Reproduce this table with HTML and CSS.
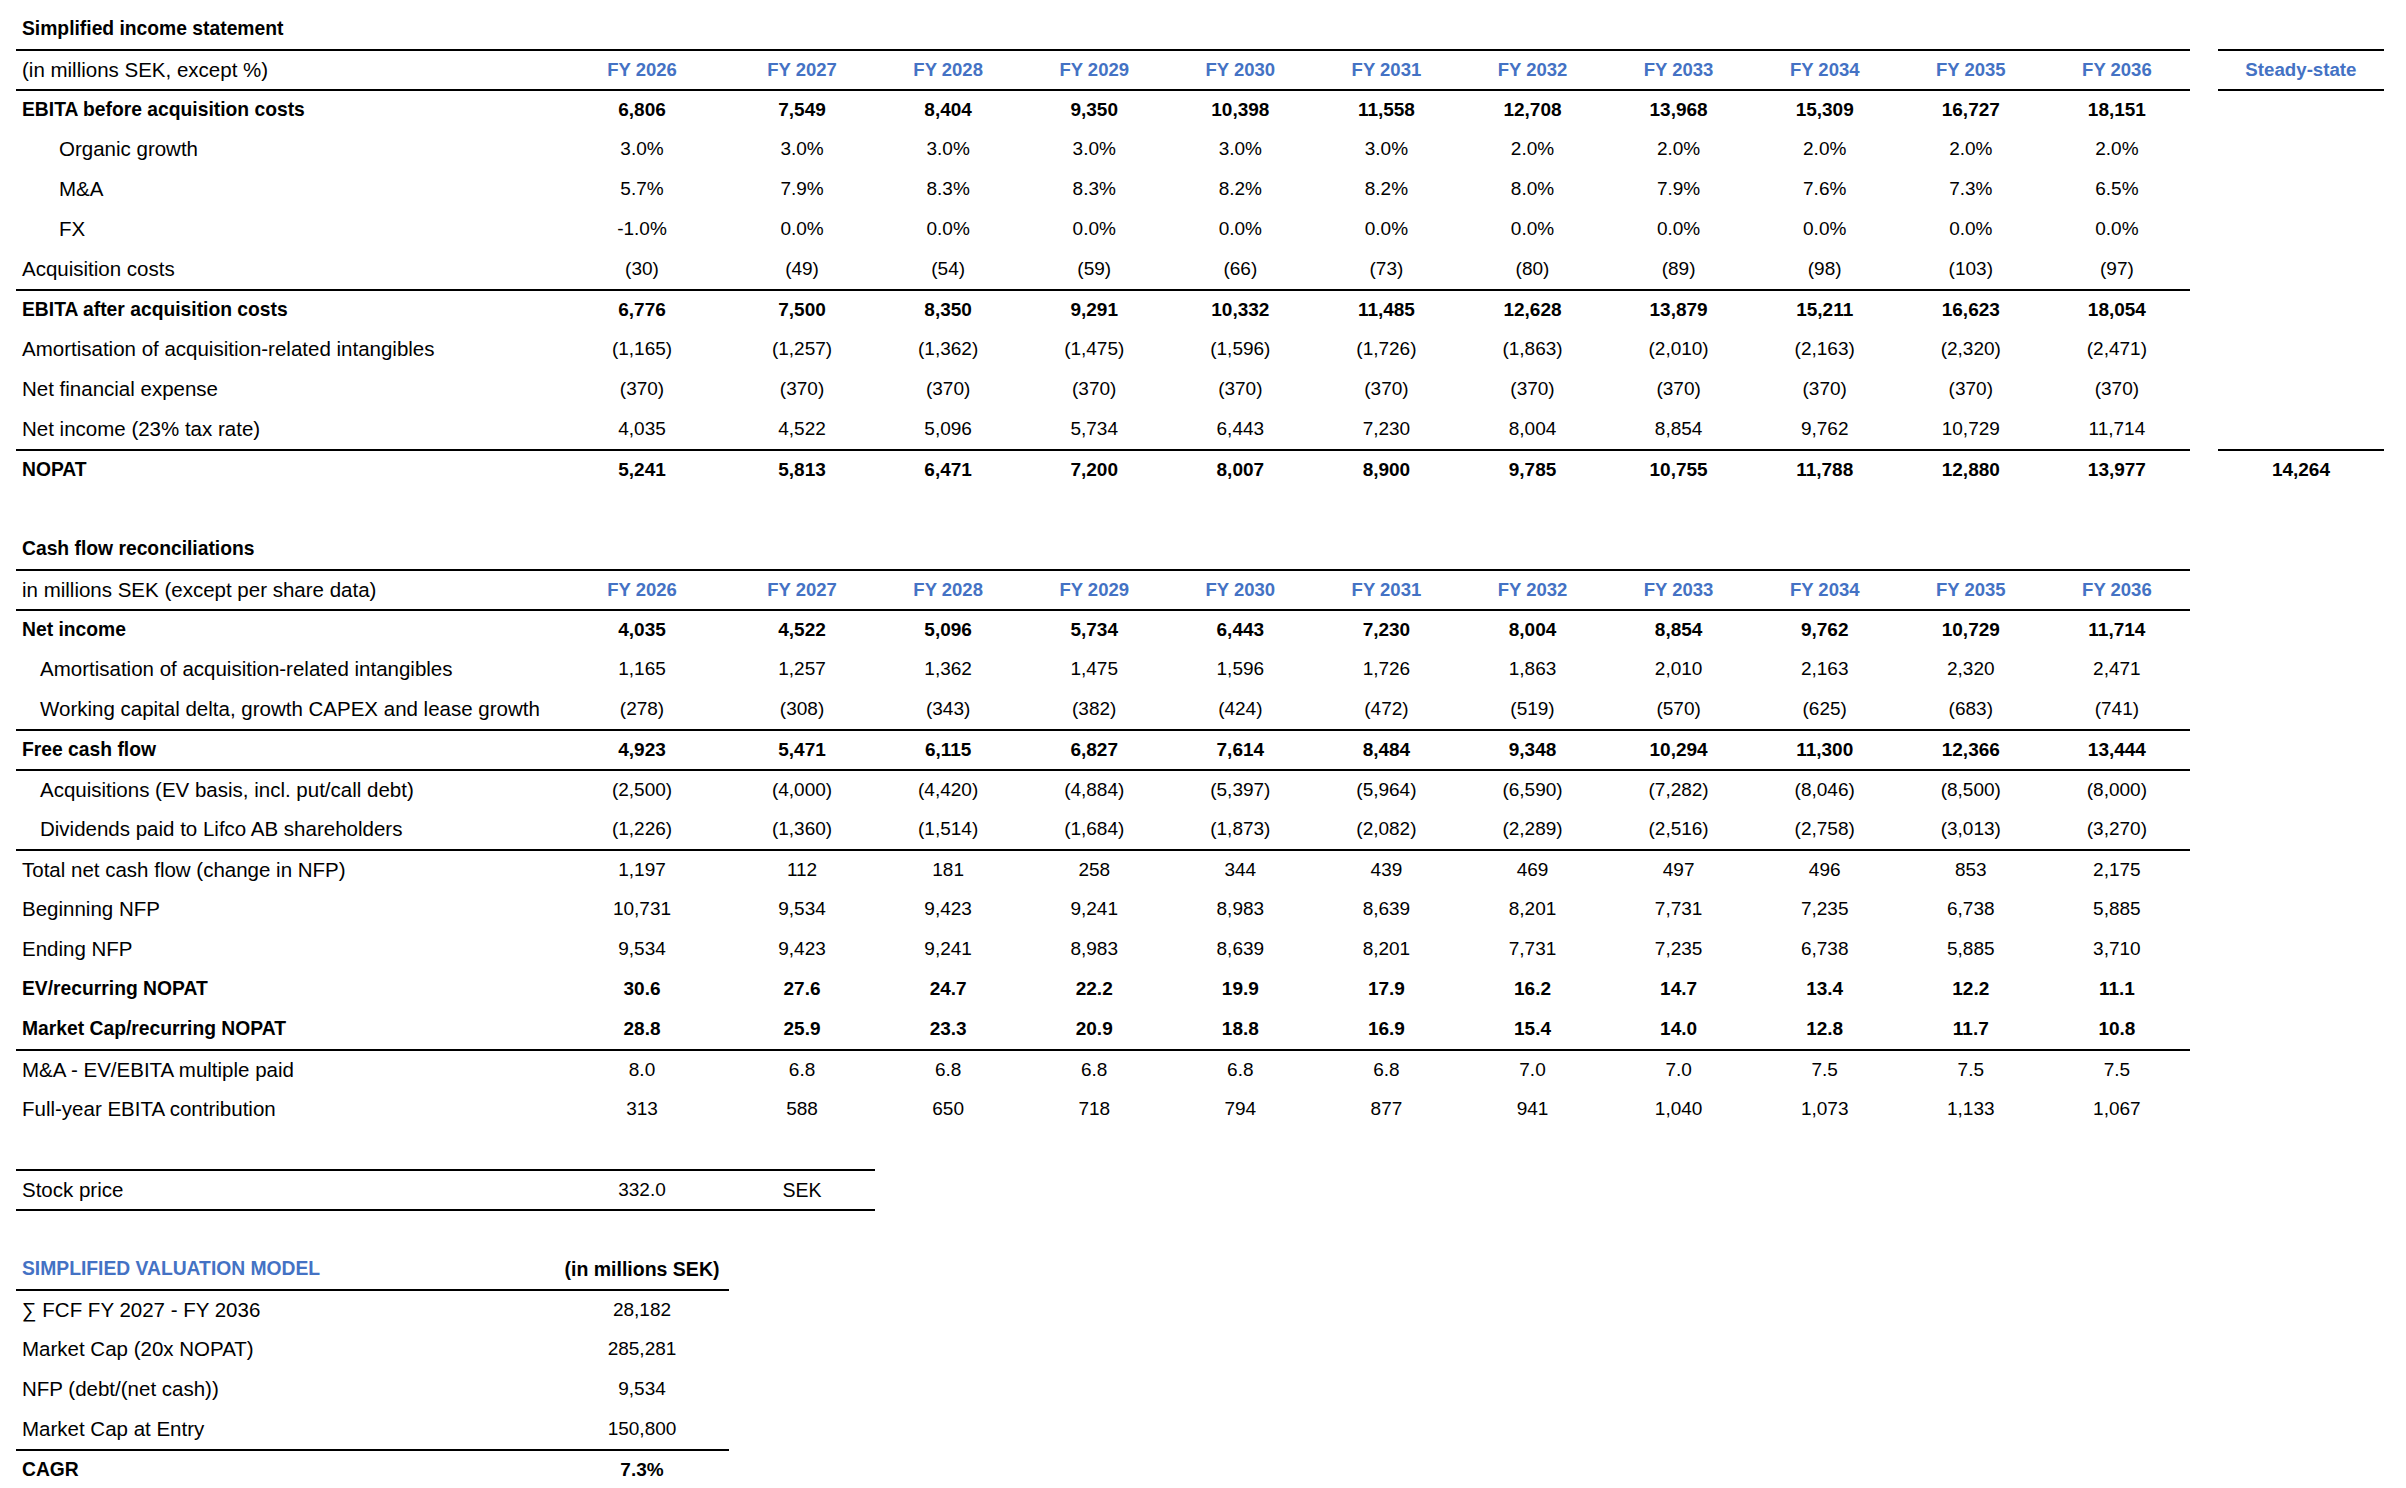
FILE: index.html
```html
<!DOCTYPE html>
<html lang="en">
<head>
<meta charset="utf-8">
<title>Simplified income statement</title>
<link rel="stylesheet" href="styles.css">
</head>
<body>
<div class="sheet">

  <div class="row"><div class="lbl b">Simplified income statement</div></div>

  <div class="row line">
    <div class="lbl">(in millions SEK, except %)</div>
    <div class="v h">FY 2026</div><div class="v h">FY 2027</div><div class="v h">FY 2028</div><div class="v h">FY 2029</div><div class="v h">FY 2030</div><div class="v h">FY 2031</div><div class="v h">FY 2032</div><div class="v h">FY 2033</div><div class="v h">FY 2034</div><div class="v h">FY 2035</div><div class="v h">FY 2036</div>
    <div class="sp"></div><div class="st h ln">Steady-state</div>
  </div>

  <div class="row line">
    <div class="lbl b">EBITA before acquisition costs</div>
    <div class="v b">6,806</div><div class="v b">7,549</div><div class="v b">8,404</div><div class="v b">9,350</div><div class="v b">10,398</div><div class="v b">11,558</div><div class="v b">12,708</div><div class="v b">13,968</div><div class="v b">15,309</div><div class="v b">16,727</div><div class="v b">18,151</div>
    <div class="sp"></div><div class="st ln"></div>
  </div>

  <div class="row">
    <div class="lbl i1">Organic growth</div>
    <div class="v">3.0%</div><div class="v">3.0%</div><div class="v">3.0%</div><div class="v">3.0%</div><div class="v">3.0%</div><div class="v">3.0%</div><div class="v">2.0%</div><div class="v">2.0%</div><div class="v">2.0%</div><div class="v">2.0%</div><div class="v">2.0%</div>
  </div>

  <div class="row">
    <div class="lbl i1">M&amp;A</div>
    <div class="v">5.7%</div><div class="v">7.9%</div><div class="v">8.3%</div><div class="v">8.3%</div><div class="v">8.2%</div><div class="v">8.2%</div><div class="v">8.0%</div><div class="v">7.9%</div><div class="v">7.6%</div><div class="v">7.3%</div><div class="v">6.5%</div>
  </div>

  <div class="row">
    <div class="lbl i1">FX</div>
    <div class="v">-1.0%</div><div class="v">0.0%</div><div class="v">0.0%</div><div class="v">0.0%</div><div class="v">0.0%</div><div class="v">0.0%</div><div class="v">0.0%</div><div class="v">0.0%</div><div class="v">0.0%</div><div class="v">0.0%</div><div class="v">0.0%</div>
  </div>

  <div class="row">
    <div class="lbl">Acquisition costs</div>
    <div class="v">(30)</div><div class="v">(49)</div><div class="v">(54)</div><div class="v">(59)</div><div class="v">(66)</div><div class="v">(73)</div><div class="v">(80)</div><div class="v">(89)</div><div class="v">(98)</div><div class="v">(103)</div><div class="v">(97)</div>
  </div>

  <div class="row line">
    <div class="lbl b">EBITA after acquisition costs</div>
    <div class="v b">6,776</div><div class="v b">7,500</div><div class="v b">8,350</div><div class="v b">9,291</div><div class="v b">10,332</div><div class="v b">11,485</div><div class="v b">12,628</div><div class="v b">13,879</div><div class="v b">15,211</div><div class="v b">16,623</div><div class="v b">18,054</div>
  </div>

  <div class="row">
    <div class="lbl">Amortisation of acquisition-related intangibles</div>
    <div class="v">(1,165)</div><div class="v">(1,257)</div><div class="v">(1,362)</div><div class="v">(1,475)</div><div class="v">(1,596)</div><div class="v">(1,726)</div><div class="v">(1,863)</div><div class="v">(2,010)</div><div class="v">(2,163)</div><div class="v">(2,320)</div><div class="v">(2,471)</div>
  </div>

  <div class="row">
    <div class="lbl">Net financial expense</div>
    <div class="v">(370)</div><div class="v">(370)</div><div class="v">(370)</div><div class="v">(370)</div><div class="v">(370)</div><div class="v">(370)</div><div class="v">(370)</div><div class="v">(370)</div><div class="v">(370)</div><div class="v">(370)</div><div class="v">(370)</div>
  </div>

  <div class="row">
    <div class="lbl">Net income (23% tax rate)</div>
    <div class="v">4,035</div><div class="v">4,522</div><div class="v">5,096</div><div class="v">5,734</div><div class="v">6,443</div><div class="v">7,230</div><div class="v">8,004</div><div class="v">8,854</div><div class="v">9,762</div><div class="v">10,729</div><div class="v">11,714</div>
  </div>

  <div class="row line">
    <div class="lbl b">NOPAT</div>
    <div class="v b">5,241</div><div class="v b">5,813</div><div class="v b">6,471</div><div class="v b">7,200</div><div class="v b">8,007</div><div class="v b">8,900</div><div class="v b">9,785</div><div class="v b">10,755</div><div class="v b">11,788</div><div class="v b">12,880</div><div class="v b">13,977</div>
    <div class="sp"></div><div class="st b ln">14,264</div>
  </div>

  <div class="row"></div>

  <div class="row"><div class="lbl b">Cash flow reconciliations</div></div>

  <div class="row line">
    <div class="lbl">in millions SEK (except per share data)</div>
    <div class="v h">FY 2026</div><div class="v h">FY 2027</div><div class="v h">FY 2028</div><div class="v h">FY 2029</div><div class="v h">FY 2030</div><div class="v h">FY 2031</div><div class="v h">FY 2032</div><div class="v h">FY 2033</div><div class="v h">FY 2034</div><div class="v h">FY 2035</div><div class="v h">FY 2036</div>
  </div>

  <div class="row line">
    <div class="lbl b">Net income</div>
    <div class="v b">4,035</div><div class="v b">4,522</div><div class="v b">5,096</div><div class="v b">5,734</div><div class="v b">6,443</div><div class="v b">7,230</div><div class="v b">8,004</div><div class="v b">8,854</div><div class="v b">9,762</div><div class="v b">10,729</div><div class="v b">11,714</div>
  </div>

  <div class="row">
    <div class="lbl i2">Amortisation of acquisition-related intangibles</div>
    <div class="v">1,165</div><div class="v">1,257</div><div class="v">1,362</div><div class="v">1,475</div><div class="v">1,596</div><div class="v">1,726</div><div class="v">1,863</div><div class="v">2,010</div><div class="v">2,163</div><div class="v">2,320</div><div class="v">2,471</div>
  </div>

  <div class="row">
    <div class="lbl i2">Working capital delta, growth CAPEX and lease growth</div>
    <div class="v">(278)</div><div class="v">(308)</div><div class="v">(343)</div><div class="v">(382)</div><div class="v">(424)</div><div class="v">(472)</div><div class="v">(519)</div><div class="v">(570)</div><div class="v">(625)</div><div class="v">(683)</div><div class="v">(741)</div>
  </div>

  <div class="row line">
    <div class="lbl b">Free cash flow</div>
    <div class="v b">4,923</div><div class="v b">5,471</div><div class="v b">6,115</div><div class="v b">6,827</div><div class="v b">7,614</div><div class="v b">8,484</div><div class="v b">9,348</div><div class="v b">10,294</div><div class="v b">11,300</div><div class="v b">12,366</div><div class="v b">13,444</div>
  </div>

  <div class="row line">
    <div class="lbl i2">Acquisitions (EV basis, incl. put/call debt)</div>
    <div class="v">(2,500)</div><div class="v">(4,000)</div><div class="v">(4,420)</div><div class="v">(4,884)</div><div class="v">(5,397)</div><div class="v">(5,964)</div><div class="v">(6,590)</div><div class="v">(7,282)</div><div class="v">(8,046)</div><div class="v">(8,500)</div><div class="v">(8,000)</div>
  </div>

  <div class="row">
    <div class="lbl i2">Dividends paid to Lifco AB shareholders</div>
    <div class="v">(1,226)</div><div class="v">(1,360)</div><div class="v">(1,514)</div><div class="v">(1,684)</div><div class="v">(1,873)</div><div class="v">(2,082)</div><div class="v">(2,289)</div><div class="v">(2,516)</div><div class="v">(2,758)</div><div class="v">(3,013)</div><div class="v">(3,270)</div>
  </div>

  <div class="row line">
    <div class="lbl">Total net cash flow (change in NFP)</div>
    <div class="v">1,197</div><div class="v">112</div><div class="v">181</div><div class="v">258</div><div class="v">344</div><div class="v">439</div><div class="v">469</div><div class="v">497</div><div class="v">496</div><div class="v">853</div><div class="v">2,175</div>
  </div>

  <div class="row">
    <div class="lbl">Beginning NFP</div>
    <div class="v">10,731</div><div class="v">9,534</div><div class="v">9,423</div><div class="v">9,241</div><div class="v">8,983</div><div class="v">8,639</div><div class="v">8,201</div><div class="v">7,731</div><div class="v">7,235</div><div class="v">6,738</div><div class="v">5,885</div>
  </div>

  <div class="row">
    <div class="lbl">Ending NFP</div>
    <div class="v">9,534</div><div class="v">9,423</div><div class="v">9,241</div><div class="v">8,983</div><div class="v">8,639</div><div class="v">8,201</div><div class="v">7,731</div><div class="v">7,235</div><div class="v">6,738</div><div class="v">5,885</div><div class="v">3,710</div>
  </div>

  <div class="row">
    <div class="lbl b">EV/recurring NOPAT</div>
    <div class="v b">30.6</div><div class="v b">27.6</div><div class="v b">24.7</div><div class="v b">22.2</div><div class="v b">19.9</div><div class="v b">17.9</div><div class="v b">16.2</div><div class="v b">14.7</div><div class="v b">13.4</div><div class="v b">12.2</div><div class="v b">11.1</div>
  </div>

  <div class="row">
    <div class="lbl b">Market Cap/recurring NOPAT</div>
    <div class="v b">28.8</div><div class="v b">25.9</div><div class="v b">23.3</div><div class="v b">20.9</div><div class="v b">18.8</div><div class="v b">16.9</div><div class="v b">15.4</div><div class="v b">14.0</div><div class="v b">12.8</div><div class="v b">11.7</div><div class="v b">10.8</div>
  </div>

  <div class="row line">
    <div class="lbl">M&amp;A - EV/EBITA multiple paid</div>
    <div class="v">8.0</div><div class="v">6.8</div><div class="v">6.8</div><div class="v">6.8</div><div class="v">6.8</div><div class="v">6.8</div><div class="v">7.0</div><div class="v">7.0</div><div class="v">7.5</div><div class="v">7.5</div><div class="v">7.5</div>
  </div>

  <div class="row">
    <div class="lbl">Full-year EBITA contribution</div>
    <div class="v">313</div><div class="v">588</div><div class="v">650</div><div class="v">718</div><div class="v">794</div><div class="v">877</div><div class="v">941</div><div class="v">1,040</div><div class="v">1,073</div><div class="v">1,133</div><div class="v">1,067</div>
  </div>

  <div class="row"></div>

  <div class="row line">
    <div class="lbl">Stock price</div>
    <div class="v">332.0</div><div class="v t">SEK</div>
  </div>

  <div class="row line">
    <div class="lbl"></div><div class="v"></div><div class="v"></div>
  </div>

  <div class="row">
    <div class="lbl b blue">SIMPLIFIED VALUATION MODEL</div>
    <div class="v b t">(in millions SEK)</div>
  </div>

  <div class="row line">
    <div class="lbl">&#8721; FCF FY 2027 - FY 2036</div>
    <div class="v">28,182</div>
  </div>

  <div class="row">
    <div class="lbl">Market Cap (20x NOPAT)</div>
    <div class="v">285,281</div>
  </div>

  <div class="row">
    <div class="lbl">NFP (debt/(net cash))</div>
    <div class="v">9,534</div>
  </div>

  <div class="row">
    <div class="lbl">Market Cap at Entry</div>
    <div class="v">150,800</div>
  </div>

  <div class="row line">
    <div class="lbl b">CAGR</div>
    <div class="v b">7.3%</div>
  </div>

</div>
</body>
</html>
```

FILE: styles.css
```css
html, body {
  margin: 0;
  padding: 0;
  background: #ffffff;
}

body {
  font-family: "Liberation Sans", Arial, "DejaVu Sans", sans-serif;
  color: #000000;
}

.sheet {
  padding: 9px 0 0 16px;
}

.row {
  display: grid;
  grid-template-columns: 539px 174px repeat(10, 146.1px) 28px 166px;
  height: 40px;
  align-items: stretch;
}

.row > div {
  box-sizing: border-box;
  display: flex;
  align-items: center;
  white-space: nowrap;
}

.lbl {
  padding-left: 6px;
  font-size: 20.5px;
}

.lbl.b {
  font-size: 19.3px;
}

.i1 {
  padding-left: 43px;
}

.i2 {
  padding-left: 24px;
}

.v,
.st {
  justify-content: center;
  font-size: 19px;
}

.t {
  font-size: 19.5px;
}

.b {
  font-weight: 700;
}

.h {
  font-weight: 700;
  font-size: 18.5px;
  color: #4472c4;
}

.st.h {
  font-size: 18.7px;
}

.blue {
  color: #4472c4;
}

.row.line > .lbl,
.row.line > .v {
  border-top: 2px solid #000000;
}

.st.ln {
  border-top: 2px solid #000000;
}
```
